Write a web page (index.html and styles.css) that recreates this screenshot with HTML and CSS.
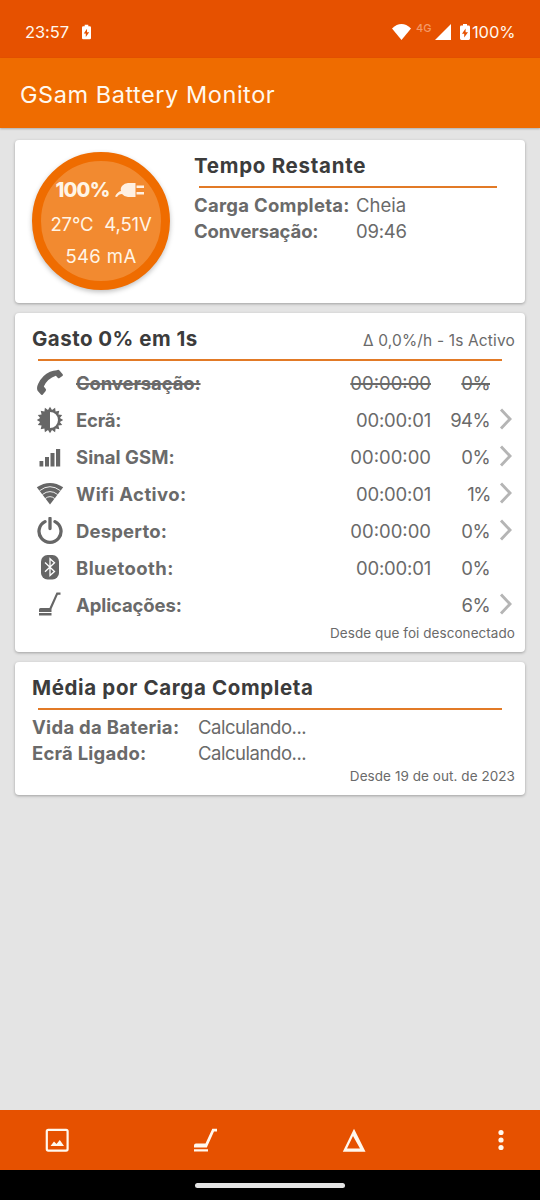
FILE: index.html
```html
<!DOCTYPE html>
<html lang="pt">
<head>
<meta charset="utf-8">
<title>GSam Battery Monitor</title>
<link rel="stylesheet" href="styles.css">
</head>
<body>
<svg class="defs" width="0" height="0">
  <symbol id="chevron" viewBox="0 0 14 22"><path d="M2 1.5 L11 11 L2 20.5" fill="none" stroke="#b5b5b5" stroke-width="2.9"/></symbol>
  <symbol id="battery" viewBox="0 0 10 16"><path fill-rule="evenodd" d="M3 0h4v1.6h1.6Q10 1.6 10 3v11.6Q10 16 8.6 16H1.4Q0 16 0 14.6V3Q0 1.6 1.4 1.6H3zM5.6 4.4L2 9.8h2.2v3.8L8 8.2H5.6z"/></symbol>
</svg>
<header class="status">
  <span class="clock">23:57</span>
  <svg class="bat-left" width="9" height="16"><use href="#battery"/></svg>
  <span class="spacer"></span>
  <svg class="wifi" width="19" height="16" viewBox="0 0 20 16" preserveAspectRatio="none"><path d="M0 4.400Q10-4.300 20 4.400L10 16z"/></svg>
  <span class="net">4G</span>
  <svg class="cell" width="16" height="16" viewBox="0 0 16 16"><path d="M16 0v16H0z"/></svg>
  <svg class="bat-right" width="10" height="16"><use href="#battery"/></svg>
  <span class="level">100%</span>
</header>
<div class="appbar"><h1>GSam Battery Monitor</h1></div>
<main>
  <section class="card summary">
    <div class="gauge">
      <div class="g1"><b>100%</b><svg width="30" height="16" viewBox="0 0 30 16"><path d="M0 14.5Q2.5 9.5 6 9Q5 6 7.5 3.5Q9.5 1 13 1H20.5V15H13Q9.500 15 7 12Q3.500 12 2 15zM21.500 3.500H29V6H21.500zM21.500 10H29V12.500H21.500z"/></svg></div>
      <div class="g2"><span>27°C</span><span>4,51V</span></div>
      <div class="g3">546 mA</div>
    </div>
    <div class="remaining">
      <h2 class="t-remaining">Tempo Restante</h2>
      <hr>
      <dl><dt class="l-full">Carga Completa:</dt><dd class="v-full">Cheia</dd><dt class="l-talk">Conversação:</dt><dd class="v-talk">09:46</dd></dl>
    </div>
  </section>

  <section class="card usage">
    <div class="head"><h2 class="t-usage">Gasto 0% em 1s</h2><span class="rate">Δ 0,0%/h - 1s Activo</span></div>
    <hr>
    <div class="row off">
      <svg width="28" height="28" viewBox="0 0 28 28"><path d="M20.800 1.300Q22.500.300 23.500 1.500L26.700 5.200Q27.400 6.300 26.400 7L23.500 9.100Q22.500 9.700 21.700 8.700L19.900 6.800Q11.500 9.500 7.800 17.500L9.800 20.100Q10.500 21.200 9.500 22.200L6.800 25.500Q5.800 26.600 4.700 25.300L1.600 21.700Q.200 19 2.200 14.700Q6.500 6 14 2.800Q17.500 1.300 20.800 1.300z"/></svg>
      <span class="name n1">Conversação:</span><span class="time">00:00:00</span><span class="pct">0%</span><i></i>
    </div>
    <div class="row">
      <svg width="28" height="28" viewBox="0 0 28 28"><path fill-rule="evenodd" d="M14.0 .8 L16.0 4.100 L19.100 1.800 L19.600 5.600 L23.300 4.700 L22.400 8.400 L26.200 8.900 L23.900 12.000 L27.200 14.0 L23.900 16.000 L26.200 19.100 L22.400 19.600 L23.300 23.300 L19.600 22.400 L19.100 26.200 L16.0 23.900 L14.0 27.200 L12.0 23.900 L8.900 26.200 L8.400 22.400 L4.700 23.300 L5.600 19.600 L1.800 19.100 L4.100 16.0 L.8 14.0 L4.100 12.0 L1.800 8.900 L5.600 8.400 L4.700 4.700 L8.400 5.600 L8.900 1.800 L12.0 4.100zM14 6V22A8 8 0 0 0 14 6z"/></svg>
      <span class="name n2">Ecrã:</span><span class="time one">00:00:01</span><span class="pct">94%</span><svg class="chev" width="14" height="22"><use href="#chevron"/></svg>
    </div>
    <div class="row">
      <svg width="28" height="28" viewBox="0 0 28 28"><path d="M3.500 18h3.800v5.500H3.500zM9 14h4v9.500H9zM14.500 10h4v13.500h-4zM20 6h4.200v17.500H20z"/></svg>
      <span class="name n3">Sinal GSM:</span><span class="time">00:00:00</span><span class="pct">0%</span><svg class="chev" width="14" height="22"><use href="#chevron"/></svg>
    </div>
    <div class="row">
      <svg width="28" height="28" viewBox="0 0 28 28"><path d="M.8 7.300Q14-1.500 27.200 7.300L14 24.500z"/><path d="M3.600 10.700Q14 2.700 24.400 10.700M6.400 14.500Q14 8.700 21.600 14.500M9.300 18.500Q14 14.800 18.700 18.500" fill="none" stroke="#fff" stroke-width=".9"/></svg>
      <span class="name n4">Wifi Activo:</span><span class="time one">00:00:01</span><span class="pct p1">1%</span><svg class="chev" width="14" height="22"><use href="#chevron"/></svg>
    </div>
    <div class="row">
      <svg width="28" height="28" viewBox="0 0 28 28"><path d="M9 4.600A11 11 0 1 0 19 4.600M14 1.300V11.500" fill="none" stroke="#666" stroke-width="3.300" stroke-linecap="round"/></svg>
      <span class="name n5">Desperto:</span><span class="time">00:00:00</span><span class="pct">0%</span><svg class="chev" width="14" height="22"><use href="#chevron"/></svg>
    </div>
    <div class="row">
      <svg width="28" height="28" viewBox="0 0 28 28"><rect x="5" y="1" width="18" height="24.500" rx="6.500"/><path d="M9 8.500L18.500 17.500L14 21.500V4.800L18.500 8.800L9 17.800" fill="none" stroke="#fff" stroke-width="1.300"/></svg>
      <span class="name n6">Bluetooth:</span><span class="time one">00:00:01</span><span class="pct">0%</span><i></i>
    </div>
    <div class="row">
      <svg width="28" height="28" viewBox="0 0 28 28"><path d="M24.500 1.500H20.500L13.500 17H4.500Q3 17 3 18.500V21H15.500V18L21.800 3.700H24.500zM3 22H15.500V24.500H3z"/></svg>
      <span class="name n7">Aplicações:</span><span class="time"></span><span class="pct">6%</span><svg class="chev" width="14" height="22"><use href="#chevron"/></svg>
    </div>
    <p class="note since">Desde que foi desconectado</p>
  </section>

  <section class="card average">
    <h2 class="t-average">Média por Carga Completa</h2>
    <hr>
    <dl><dt class="l-life">Vida da Bateria:</dt><dd class="calc">Calculando...</dd><dt class="l-screen">Ecrã Ligado:</dt><dd class="calc">Calculando...</dd></dl>
    <p class="note date">Desde 19 de out. de 2023</p>
  </section>
</main>
<nav class="toolbar">
  <svg class="tb-chart" width="24" height="24" viewBox="0 0 24 24"><rect x="1.800" y="1.800" width="20.800" height="20.800" rx="1.500" fill="none" stroke="#fff8ee" stroke-width="2.200"/><path d="M5.500 18L9 13.500L11.500 16L14.800 12L19 18z"/></svg>
  <svg class="tb-apps" width="24" height="24" viewBox="0 0 24 24"><path d="M24 .8H19.300L12.500 15.500H3Q1 15.500 1 17.500V19.500H13.800L21 3.400H24zM1 21.300H15V23.500H1z"/></svg>
  <svg class="tb-delta" width="24" height="24" viewBox="0 0 24 24"><path fill-rule="evenodd" d="M12 .8L23.500 23.700H.8zM11 8L5 20.500H18z"/></svg>
  <svg class="tb-more" width="6" height="22" viewBox="0 0 6 22"><circle cx="3" cy="3.500" r="2.600"/><circle cx="3" cy="11" r="2.600"/><circle cx="3" cy="18.500" r="2.600"/></svg>
</nav>
<footer class="gesture"><span></span></footer>
</body>
</html>
```

FILE: styles.css
```css
* { box-sizing: border-box; margin: 0; padding: 0; }
body { width: 540px; height: 1200px; display: flex; flex-direction: column; background: #e4e4e4; font-family: Inter, "Open Sans", sans-serif; color: #6a6a6a; white-space: nowrap; overflow: hidden; }
svg { display: block; flex: none; fill: #666; }
.defs { position: absolute; }

/* Status and app bars */
.status { height: 58px; background: #e65100; color: #fff8ee; display: flex; align-items: center; padding: 5px 0 0 25px; font-size: 16.5px; line-height: 20px; }
.status svg { fill: #fff; }
.clock { width: 57px; letter-spacing: -.1px; }
.spacer { flex: 1; }
.net { width: 17px; margin: -8px 2px 0 5px; font-size: 11px; font-weight: 500; color: #f49a68; line-height: 12px; }
.bat-right { margin-left: 9px; }
.level { width: 70px; padding-left: 2px; letter-spacing: -.1px; }
.appbar { height: 70px; padding: 3px 20px 0; background: #ef6c00; color: #fff8ee; display: flex; align-items: center; box-shadow: 0 1px 2px rgba(0,0,0,.25); }
h1 { font-size: 23.5px; font-weight: 400; letter-spacing: .55px; }

/* Cards */
main { flex: 1; display: flex; flex-direction: column; gap: 10px; padding: 12px 15px 0; }
.card { width: 510px; background: #fff; border-radius: 4px; box-shadow: 0 1px 3px rgba(0,0,0,.3); }
h2 { font-size: 20.5px; line-height: 26px; font-weight: 700; color: #3c3c3c; }
.t-remaining { letter-spacing: .72px; }
.t-usage { letter-spacing: .47px; }
.t-average { letter-spacing: .63px; }
hr { border: 0; height: 2px; background: #e27a26; }
dl { display: grid; grid-auto-rows: 26px; line-height: 26px; font-size: 18.5px; }
dt { font-weight: 700; }
.note { text-align: right; font-size: 13.5px; line-height: 18px; letter-spacing: .06px; }

/* Battery summary */
.summary { height: 163px; display: flex; padding: 12px 0 0 17px; gap: 24px; }
.gauge { width: 138px; height: 138px; border: 9px solid #ef6c00; border-radius: 50%; background: #f28a30; box-shadow: 0 2px 5px rgba(0,0,0,.25); color: #fff5e6; display: flex; flex-direction: column; align-items: center; padding-top: 19px; font-size: 18.5px; line-height: 20px; }
.gauge svg { fill: #fff0e2; }
.g1 { display: flex; gap: 6px; align-items: center; margin-left: -1px; }
.g1 b { font-size: 20px; font-weight: 800; letter-spacing: -.8px; }
.g2 { display: flex; gap: 11px; margin-top: 14px; letter-spacing: -.15px; }
.g3 { margin-top: 12px; letter-spacing: .4px; }
.remaining { padding-top: 1px; width: 330px; }
.remaining hr { width: 298px; margin: 7px 0 4px 5px; }
.remaining dl { grid-template-columns: 162px 1fr; }
.l-full { letter-spacing: .27px; }
.l-talk { letter-spacing: -.13px; }
.v-talk { letter-spacing: -.2px; }

/* Usage table */
.usage { height: 339px; padding: 13px 10px 0 17px; }
.head { display: flex; justify-content: space-between; height: 26px; }
.rate { font-size: 15.5px; line-height: 30px; letter-spacing: .15px; }
.usage hr, .average hr { width: 464px; margin-left: 6px; }
.usage hr { margin-top: 7px; margin-bottom: 3px; }
.row { height: 37px; display: grid; grid-template-columns: 44px 1fr 120px 58px 25px; align-items: center; font-size: 18.5px; line-height: 26px; }
.row > svg:first-child { margin-left: 4px; }
.name { font-weight: 700; }
.n1, .n7 { letter-spacing: -.12px; }
.n2 { letter-spacing: -.2px; }
.n3 { letter-spacing: .05px; }
.n4 { letter-spacing: .43px; }
.n5 { letter-spacing: .18px; }
.n6 { letter-spacing: .42px; }
.time, .pct { text-align: right; }
.time { padding-right: 1px; }
.one { letter-spacing: -.2px; }
.pct { letter-spacing: -.6px; }
.p1 { letter-spacing: -1.5px; }
.chev { margin-left: 8.5px; margin-top: -1px; }
.off span { text-decoration: line-through; text-decoration-thickness: 1.5px; }
.since { margin-top: 1px; }

/* Averages */
.average { height: 133px; padding: 13px 10px 0 17px; }
.average hr { margin-top: 7px; margin-bottom: 4px; }
.average dl { grid-template-columns: 166px 1fr; }
.average .note { margin-top: 1px; }
.l-life { letter-spacing: .3px; }
.l-screen { letter-spacing: .23px; }
.calc { letter-spacing: -.46px; }

/* Bottom bars */
.toolbar { height: 60px; background: #e65100; display: grid; grid-template-columns: 148.5px 148.5px 148px 95px; align-items: center; }
.toolbar svg { fill: #fff8ee; }
.tb-chart { margin-left: 45px; }
.tb-apps { margin-left: 44.5px; }
.tb-delta { margin-left: 45px; }
.tb-more { margin-left: 52.5px; }
.gesture { height: 30px; background: #000; display: flex; justify-content: center; align-items: center; }
.gesture span { width: 150px; height: 5px; border-radius: 3px; background: #e4e4e4; }
```
